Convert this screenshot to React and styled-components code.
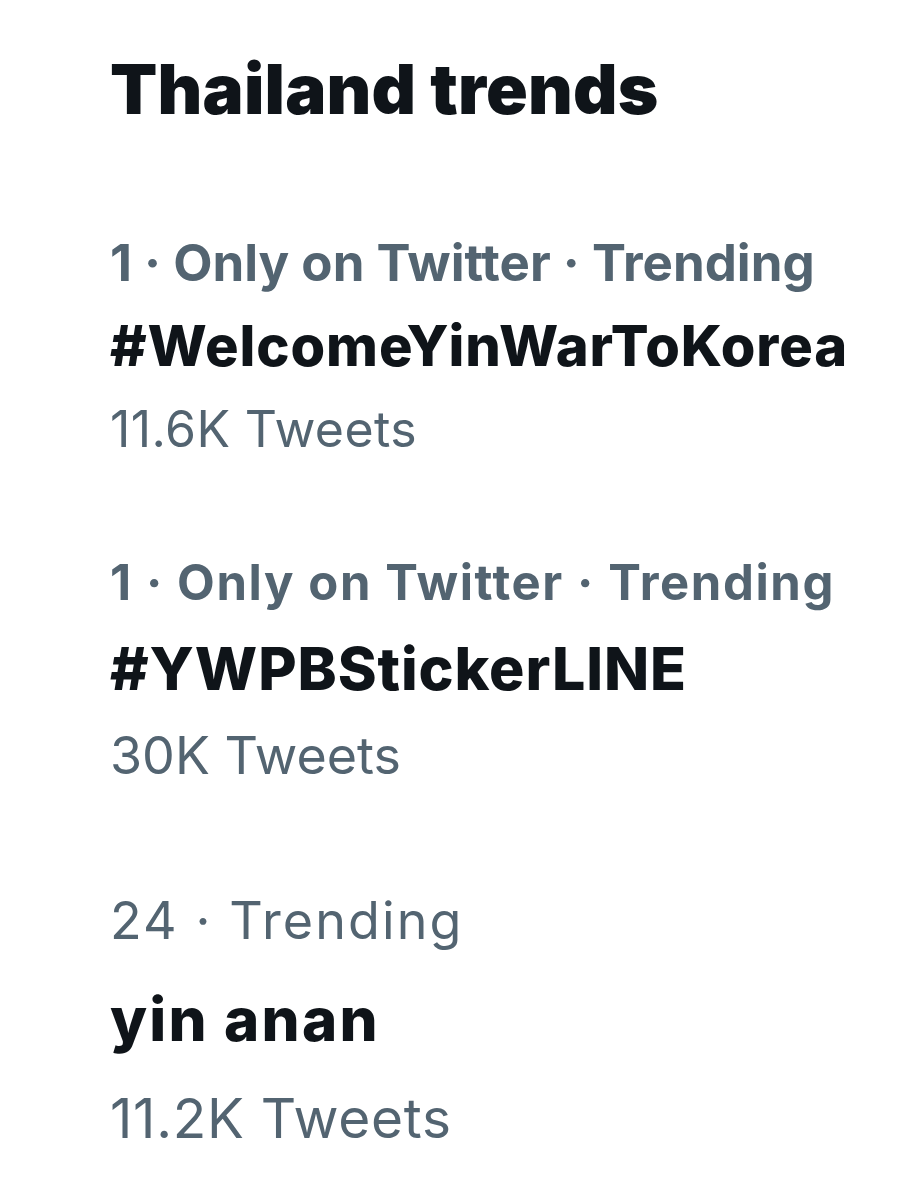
import React from "react";
import styled, { createGlobalStyle } from "styled-components";

const Global = createGlobalStyle`
  html, body { margin: 0; padding: 0; background: #ffffff; }
  body { font-family: Inter, "Noto Sans", sans-serif; -webkit-font-smoothing: antialiased; }
`;

const Page = styled.main`
  width: 900px;
  min-height: 1200px;
  box-sizing: border-box;
  padding: 55px 0 0 110px;
  display: flex;
  flex-direction: column;
  background: #ffffff;
`;

const Title = styled.h1`
  margin: 0;
  font-size: 69px;
  line-height: 1;
  font-weight: 900;
  color: #0f1419;
  letter-spacing: 0.2px;
`;

const Section = styled.section`
  display: flex;
  flex-direction: column;
  margin-top: ${(p) => p.$top}px;
  gap: ${(p) => p.$gap}px;
`;

const Meta = styled.div`
  font-size: ${(p) => p.$size}px;
  line-height: 1;
  font-weight: ${(p) => p.$weight};
  color: #536471;
  letter-spacing: ${(p) => p.$ls}px;
  white-space: nowrap;
`;

const Headline = styled.div`
  font-size: ${(p) => p.$size}px;
  line-height: 1;
  font-weight: ${(p) => p.$weight};
  color: #0f1419;
  letter-spacing: ${(p) => p.$ls}px;
  white-space: nowrap;
`;

const Count = styled.div`
  font-size: ${(p) => p.$size}px;
  line-height: 1;
  font-weight: 400;
  color: #536471;
  letter-spacing: ${(p) => p.$ls}px;
  white-space: nowrap;
`;

const trends = [
  {
    top: 113, gap: 30,
    meta: "1 · Only on Twitter · Trending", metaSize: 51, metaWeight: 700, metaLs: 0,
    name: "#WelcomeYinWarToKorea", nameSize: 56, nameWeight: 800, nameLs: 0.9,
    count: "11.6K Tweets", countSize: 50, countLs: 0.4,
  },
  {
    top: 104, gap: 32,
    meta: "1 · Only on Twitter · Trending", metaSize: 49, metaWeight: 700, metaLs: 1.6,
    name: "#YWPBStickerLINE", nameSize: 59, nameWeight: 800, nameLs: 0.9,
    count: "30K Tweets", countSize: 52, countLs: 0,
  },
  {
    top: 113, gap: 42,
    meta: "24 · Trending", metaSize: 52, metaWeight: 400, metaLs: 2.1,
    name: "yin anan", nameSize: 60, nameWeight: 800, nameLs: 2.2,
    count: "11.2K Tweets", countSize: 55, countLs: 0.7,
  },
];

export default function App() {
  return (
    <>
      <Global />
      <Page>
        <Title>Thailand trends</Title>
        {trends.map((t, i) => (
          <Section key={i} $top={t.top} $gap={t.gap}>
            <Meta $size={t.metaSize} $weight={t.metaWeight} $ls={t.metaLs}>{t.meta}</Meta>
            <Headline $size={t.nameSize} $weight={t.nameWeight} $ls={t.nameLs}>{t.name}</Headline>
            <Count $size={t.countSize} $ls={t.countLs}>{t.count}</Count>
          </Section>
        ))}
      </Page>
    </>
  );
}
